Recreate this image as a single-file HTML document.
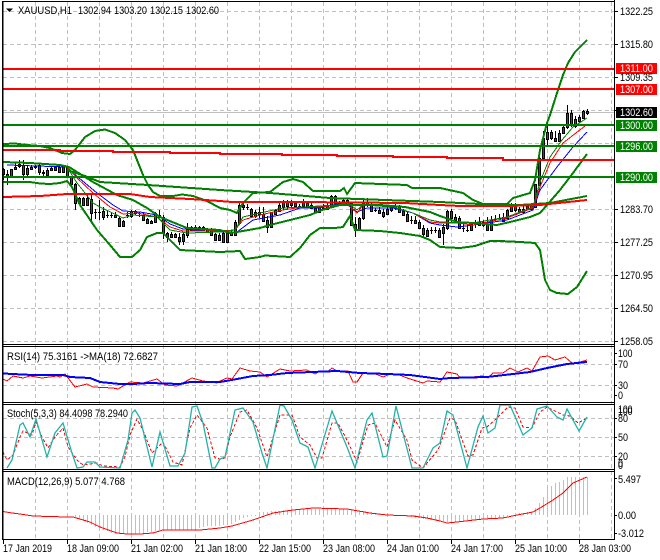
<!DOCTYPE html>
<html><head><meta charset="utf-8"><style>
html,body{margin:0;padding:0;background:#fff}
svg{display:block}
text{font-family:"Liberation Sans",sans-serif;font-size:11px;fill:#000}
.c{shape-rendering:crispEdges}
</style></head><body>
<svg width="660" height="560" viewBox="0 0 660 560" xmlns="http://www.w3.org/2000/svg">
<rect width="660" height="560" fill="#fff"/>
<g fill="none" stroke="#c0c0c0" stroke-dasharray="4 3" class="c">
<path d="M35.5 2V539M67.5 2V539M99.5 2V539M131.5 2V539M163.5 2V539M195.5 2V539M227.5 2V539M259.5 2V539M291.5 2V539M323.5 2V539M355.5 2V539M387.5 2V539M419.5 2V539M451.5 2V539M483.5 2V539M515.5 2V539M547.5 2V539M579.5 2V539M611.5 2V539"/>
<path d="M3 11.5H614M3 44.5H614M3 77.5H614M3 110.5H614M3 143.5H614M3 176.5H614M3 209.5H614M3 242.5H614M3 275.5H614M3 308.5H614M3 341.5H614"/>
<path d="M3 364.5H614M3 385.5H614M3 418.5H614M3 437.5H614M3 456.5H614"/>
</g>
<path d="M3 112.5H614" stroke="#c0c0c0" fill="none" class="c"/>

<!-- candle wicks -->
<path class="c" stroke="#000" fill="none" d="M3.5 168V180M7.5 170V185M11.5 169V176M15.5 163V170M19.5 160V168M23.5 160V180M27.5 165V176M31.5 165V170M35.5 165V169M39.5 164V175M43.5 170V176M47.5 168V177M51.5 167V171M55.5 166V171M59.5 166V173M63.5 165V173M67.5 166V178M71.5 176V185M75.5 183V210M79.5 197V205M83.5 197V206M87.5 193V206M91.5 193V223M95.5 209V219M99.5 200V220M103.5 207V220M107.5 210V218M111.5 213V218M115.5 212V218M119.5 217V226M123.5 220V226M127.5 212V218M131.5 210V218M135.5 210V215M139.5 212V217M143.5 213V221M147.5 218V223M151.5 220V224M155.5 212V223M159.5 210V218M163.5 215V239M167.5 232V242M171.5 232V238M175.5 233V238M179.5 233V245M183.5 232V245M187.5 223V238M191.5 226V231M195.5 225V230M199.5 226V231M203.5 226V231M207.5 228V233M211.5 228V236M215.5 233V241M219.5 233V241M223.5 232V243M227.5 230V243M231.5 231V236M235.5 220V236M239.5 203V223M243.5 203V210M247.5 204V210M251.5 208V217M255.5 210V218M259.5 207V218M263.5 207V222M267.5 216V233M271.5 212V227M275.5 209V215M279.5 202V212M283.5 200V210M287.5 200V210M291.5 200V208M295.5 201V207M299.5 204V208M303.5 199V208M307.5 202V207M311.5 203V209M315.5 207V213M319.5 206V213M323.5 204V210M327.5 203V210M331.5 195V208M335.5 195V204M339.5 201V206M343.5 199V205M347.5 199V205M351.5 202V226M355.5 217V237M359.5 217V231M363.5 200V220M367.5 198V207M371.5 202V212M375.5 208V212M379.5 207V214M383.5 209V218M387.5 207V215M391.5 205V212M395.5 204V210M399.5 205V213M403.5 209V216M407.5 212V222M411.5 216V224M415.5 216V224M419.5 220V229M423.5 225V238M427.5 228V236M431.5 227V234M435.5 227V233M439.5 228V238M443.5 224V245M447.5 210V230M451.5 209V222M455.5 214V221M459.5 216V229M463.5 223V232M467.5 226V232M471.5 222V230M475.5 220V228M479.5 217V226M483.5 220V227M487.5 217V230M491.5 216V230M495.5 215V221M499.5 214V220M503.5 213V221M507.5 209V218M511.5 203V212M515.5 203V212M519.5 207V213M523.5 206V213M527.5 204V210M531.5 203V209M535.5 184V208M539.5 155V186M543.5 131V158M547.5 125V145M551.5 130V140M555.5 131V142M559.5 130V142M563.5 126V134M567.5 105V129M571.5 110V127M575.5 116V128M579.5 115V123M583.5 110V119M587.5 109V115"/>
<!-- up bodies -->
<path class="c" stroke="#000" fill="#008000" d="M6.5 174.5h2v3h-2zM10.5 169.5h2v7h-2zM14.5 167.5h2v2h-2zM18.5 164.5h2v2h-2zM26.5 168.5h2v6h-2zM30.5 167.5h2v2h-2zM34.5 166.5h2v1h-2zM46.5 170.5h2v5h-2zM50.5 168.5h2v2h-2zM54.5 167.5h2v3h-2zM62.5 166.5h2v6h-2zM78.5 198.5h2v5h-2zM82.5 198.5h2v7h-2zM86.5 198.5h2v7h-2zM122.5 221.5h2v5h-2zM130.5 211.5h2v5h-2zM150.5 221.5h2v2h-2zM154.5 213.5h2v9h-2zM158.5 215.5h2v2h-2zM166.5 233.5h2v4h-2zM170.5 234.5h2v3h-2zM182.5 234.5h2v7h-2zM186.5 229.5h2v6h-2zM190.5 227.5h2v3h-2zM198.5 227.5h2v2h-2zM206.5 229.5h2v3h-2zM218.5 235.5h2v5h-2zM226.5 233.5h2v9h-2zM234.5 222.5h2v13h-2zM238.5 205.5h2v18h-2zM254.5 212.5h2v4h-2zM270.5 212.5h2v15h-2zM274.5 210.5h2v4h-2zM278.5 205.5h2v6h-2zM282.5 201.5h2v6h-2zM302.5 202.5h2v4h-2zM318.5 207.5h2v5h-2zM326.5 205.5h2v4h-2zM330.5 196.5h2v11h-2zM342.5 200.5h2v4h-2zM358.5 218.5h2v12h-2zM362.5 202.5h2v16h-2zM386.5 209.5h2v5h-2zM390.5 206.5h2v4h-2zM426.5 230.5h2v6h-2zM446.5 211.5h2v17h-2zM470.5 224.5h2v6h-2zM478.5 222.5h2v3h-2zM490.5 220.5h2v10h-2zM502.5 217.5h2v4h-2zM506.5 210.5h2v8h-2zM510.5 205.5h2v6h-2zM518.5 209.5h2v3h-2zM522.5 209.5h2v3h-2zM526.5 206.5h2v3h-2zM530.5 205.5h2v4h-2zM534.5 184.5h2v23h-2zM538.5 158.5h2v27h-2zM542.5 138.5h2v20h-2zM554.5 138.5h2v3h-2zM558.5 133.5h2v8h-2zM562.5 127.5h2v6h-2zM566.5 113.5h2v14h-2zM578.5 117.5h2v4h-2zM582.5 111.5h2v7h-2zM586.5 111.5h2v2h-2z"/>
<!-- down bodies -->
<path class="c" stroke="#000" fill="#f00" d="M2.5 169.5h2v5h-2zM22.5 165.5h2v9h-2zM38.5 165.5h2v7h-2zM42.5 172.5h2v1h-2zM58.5 167.5h2v5h-2zM66.5 167.5h2v10h-2zM70.5 177.5h2v7h-2zM74.5 184.5h2v19h-2zM90.5 199.5h2v14h-2zM102.5 211.5h2v6h-2zM114.5 215.5h2v2h-2zM118.5 218.5h2v8h-2zM134.5 211.5h2v2h-2zM142.5 215.5h2v5h-2zM146.5 219.5h2v4h-2zM162.5 217.5h2v16h-2zM174.5 234.5h2v3h-2zM178.5 237.5h2v4h-2zM194.5 227.5h2v2h-2zM202.5 227.5h2v3h-2zM210.5 231.5h2v4h-2zM214.5 234.5h2v6h-2zM222.5 233.5h2v9h-2zM230.5 233.5h2v2h-2zM242.5 205.5h2v2h-2zM250.5 209.5h2v7h-2zM258.5 212.5h2v2h-2zM262.5 214.5h2v7h-2zM266.5 220.5h2v7h-2zM286.5 202.5h2v4h-2zM290.5 203.5h2v2h-2zM294.5 203.5h2v3h-2zM306.5 203.5h2v3h-2zM310.5 205.5h2v3h-2zM314.5 208.5h2v4h-2zM334.5 196.5h2v7h-2zM338.5 202.5h2v3h-2zM346.5 200.5h2v4h-2zM350.5 203.5h2v22h-2zM354.5 224.5h2v6h-2zM366.5 202.5h2v3h-2zM370.5 204.5h2v7h-2zM378.5 210.5h2v3h-2zM382.5 212.5h2v4h-2zM398.5 206.5h2v6h-2zM402.5 211.5h2v4h-2zM406.5 214.5h2v7h-2zM414.5 220.5h2v3h-2zM418.5 222.5h2v6h-2zM422.5 228.5h2v6h-2zM438.5 230.5h2v7h-2zM442.5 227.5h2v6h-2zM450.5 211.5h2v7h-2zM454.5 217.5h2v3h-2zM458.5 218.5h2v10h-2zM482.5 222.5h2v3h-2zM486.5 224.5h2v6h-2zM514.5 205.5h2v5h-2zM546.5 132.5h2v7h-2zM550.5 132.5h2v6h-2zM570.5 113.5h2v12h-2zM574.5 119.5h2v7h-2z"/>
<!-- doji -->
<path class="c" stroke="#000" fill="none" d="M94 212.5h3M98 212.5h3M106 215.5h3M110 215.5h3M126 215.5h3M138 213.5h3M246 207.5h3M298 206.5h3M322 208.5h3M374 210.5h3M394 207.5h3M410 220.5h3M430 230.5h3M434 230.5h3M462 228.5h3M466 230.5h3M474 223.5h3M494 219.5h3M498 218.5h3"/>

<!-- thin moving averages -->
<g fill="none" stroke-width="1" class="c">
<path stroke="#00f" d="M7 165L67 167L73 173L97 193L113 205L123 211L140 212L157 215L170 224L183 229L220 232L237 232L253 220L280 215L300 208L320 208L337 204L348 205L357 212L367 208L393 208L413 213L430 223L440 225L457 227L473 225L507 220L533 210L540 190L557 167L573 147L587 132"/>
<path stroke="#f00" d="M67 167L77 178L93 193L110 207L123 214L137 213L157 217L170 227L183 231L220 231L235 230L243 220L260 215L283 210L303 207L320 207L337 205L348 205L357 213L363 205L393 207L413 213L430 222L440 223L457 223L473 225L507 218L533 208L540 187L550 163L563 143L585 126"/>
<path stroke="#008000" d="M67 167L77 183L93 203L100 207L123 218L133 215L157 217L170 230L187 233L220 232L235 230L243 217L260 213L283 208L303 207L337 205L348 203L357 210L363 205L393 207L413 213L430 220L440 222L473 223L507 217L533 207L540 182L550 157L562 140L573 127L587 118"/>
</g>

<!-- Bollinger and slow MA -->
<g fill="none" stroke="#008000" stroke-width="2" class="c">
<path d="M3 144L15 143.5L27 145L40 146L50 148L62 153L70 154L75 150L85 137L95 131L105 129.5L115 133L125 140L133 150L143 175L148 185L153 192L160 196L173 196L182 194.5L193 196L207 201L220 208L230 210L237 213L243 203L253 193L270 192L283 182L293 179L303 182L313 191L340 191L344 188L347 194L355 183L407 185L412 188L440 188L463 193L473 200L483 204L507 204L513 198L530 193L535 180L540 150L547 123L550 115L557 93L563 75L568 63L575 52L587 40"/>
<path d="M3 162L30 163L60 165L69 167L93 182L117 195L133 200L147 208L160 217L187 228L220 230L230 233L237 232L260 228L270 225L290 220L310 215L322 210L340 205L360 205L380 205L405 207L430 212L440 216L457 222L473 223L497 225L510 222L530 217L540 213L547 205L560 190L573 173L587 154"/>
<path d="M3 182L30 182L40 183.5L50 184L60 183L67 181L72 187L80 205L97 230L110 245L120 257L132 257L140 250L147 237L157 233L163 233L170 240L180 250L200 251L220 252L240 251L245 259L260 257L265 255.5L290 257L300 248L310 235L320 228L335 228L343 227L350 216L355 230L380 231L400 233L420 236L430 240L440 247L460 248L475 246L490 241L500 241L520 242L535 243L540 250L545 280L550 290L557 293L568 294L577 287L587 271"/>
<path d="M67 170L85 176L100 182L148 185L220 190L270 193L330 198L440 202L480 204L520 205L550 203L587 196"/>
</g>
<path class="c" fill="none" stroke="#f00" stroke-width="2" d="M3 197L40 196L67 194L130 194L150 197L190 199L220 201L232 202L300 202L405 203L440 205L460 206L510 206L540 205L587 200"/>
<path class="c" fill="none" stroke="#f00" stroke-width="2" d="M3 150H60V151H113V152H170V153H220V154H282V155H337V156H393V157H447V158H503V160H614"/>

<!-- levels -->
<rect x="3" y="68" width="611" height="2" fill="#f00"/>
<rect x="3" y="88" width="611" height="2" fill="#f00"/>
<rect x="3" y="124" width="611" height="2" fill="#008000"/>
<rect x="3" y="145" width="611" height="2" fill="#008000"/>
<rect x="3" y="176" width="611" height="2" fill="#008000"/>

<!-- RSI -->
<path class="c" fill="none" stroke="#f00" d="M3 379L7 381L13 376L23 378L30 376L42 378L57 376L60 377L65 374L75 387L87 384L93 387L113 388L118 389L130 382L143 383L157 379L165 385L177 386L192 378L203 381L217 383L220 381L227 378L232 379L240 368L250 371L260 372L267 377L280 369L290 371L307 370L315 374L320 371L327 372L332 368L337 371L348 371L353 382L357 382L363 373L373 373L383 377L390 374L397 374L407 378L423 383L427 381L440 382L447 372L457 374L460 378L468 378L472 377L483 376L488 378L493 373L503 373L510 368L518 372L527 368L532 371L540 357L548 356L555 360L565 357L572 363L580 362L587 360"/>
<path class="c" fill="none" stroke="#00f" stroke-width="2" d="M3 373.5L22 374.5L33 375L63 375L70 377L90 378L100 382L110 383L120 384L133 384L150 383L180 384L190 382L220 382L237 379L253 376L270 375L287 373L337 371L360 373L387 374L410 375L440 379L450 378L487 377L513 374L530 372L547 368L567 364L587 362"/>

<!-- Stoch -->
<path class="c" fill="none" stroke="#f00" stroke-dasharray="3 2" d="M3 452L7 460L13 455L20 437L23 431L32 435L36 422L42 437L48 448L55 437L63 428L68 447L77 460L83 465L97 463L103 466L120 467L125 457L130 435L137 419L143 430L152 453L163 442L173 462L182 465L190 428L197 415L207 428L215 458L220 459L225 458L230 437L240 412L247 410L257 428L267 457L280 415L292 415L300 437L310 445L317 458L322 458L332 423L338 423L348 442L357 462L368 425L375 423L387 447L395 420L407 440L412 460L423 468L438 450L440 445L450 418L455 420L468 456L473 455L482 428L487 427L497 418L508 407L515 408L523 427L532 428L540 412L547 407L557 412L563 415L570 416L578 423L587 418"/>
<path fill="none" stroke="#20b2aa" stroke-width="1.3" d="M7 468L12 460L20 425L23 423L30 437L36 419L47 457L55 433L63 423L72 453L77 468L83 467L87 462L95 462L100 467L120 468L128 440L132 413L135 410L140 418L152 467L160 432L170 466L178 466L185 453L192 407L197 406L203 423L212 468L215 468L220 459L225 457L235 410L243 408L253 422L262 453L267 468L280 405L284 406L292 420L300 443L308 447L315 468L332 411L347 447L355 468L367 420L372 413L383 457L387 456L396 406L412 468L423 468L433 448L440 443L447 411L453 415L467 468L478 427L483 416L488 433L495 428L500 405L510 405L523 435L532 428L537 409L547 406L557 417L563 420L567 409L579 431L587 417"/>

<!-- MACD histogram -->
<path class="c" fill="none" stroke="#c0c0c0" d="M75.5 515V517M79.5 515V519M83.5 515V521M87.5 515V523M91.5 515V525M95.5 515V527M99.5 515V528M103.5 515V530M107.5 515V531M111.5 515V533M115.5 515V534M119.5 515V534M123.5 515V534M127.5 515V534M131.5 515V534M135.5 515V534M139.5 515V533M143.5 515V533M147.5 515V532M151.5 515V532M155.5 515V531M159.5 515V530M163.5 515V530M167.5 515V530M171.5 515V530M175.5 515V530M179.5 515V530M183.5 515V530M187.5 515V530M191.5 515V530M195.5 515V530M199.5 515V528M203.5 515V527M207.5 515V526M211.5 515V526M215.5 515V526M219.5 515V526M223.5 515V525M227.5 515V525M231.5 515V524M235.5 515V522M239.5 515V520M243.5 515V518M247.5 515V517M251.5 515V516M255.5 515V516M259.5 512V515M263.5 512V515M267.5 512V515M271.5 511V515M275.5 511V515M279.5 511V515M283.5 510V515M287.5 510V515M291.5 510V515M295.5 510V515M299.5 509V515M303.5 509V515M307.5 509V515M311.5 509V515M315.5 509V515M319.5 509V515M323.5 509V515M327.5 509V515M331.5 509V515M335.5 509V515M339.5 509V515M343.5 509V515M347.5 510V515M351.5 510V515M355.5 510V515M359.5 511V515M363.5 511V515M367.5 512V515M371.5 513V515M375.5 513V515M379.5 514V515M407.5 515V516M411.5 515V517M415.5 515V518M419.5 515V518M423.5 515V519M427.5 515V519M431.5 515V520M435.5 515V520M439.5 515V521M443.5 515V521M447.5 515V522M451.5 515V522M455.5 515V522M459.5 515V521M463.5 515V521M467.5 515V521M471.5 515V520M475.5 515V520M479.5 515V519M483.5 515V519M487.5 515V519M491.5 515V518M495.5 515V518M499.5 515V518M503.5 515V518M507.5 515V516M515.5 513V515M519.5 513V515M523.5 513V515M527.5 512V515M531.5 512V515M535.5 508V515M539.5 503V515M543.5 497V515M547.5 487V515M551.5 486V515M555.5 483V515M559.5 482V515M563.5 480V515M567.5 477V515M571.5 477V515M575.5 477V515M579.5 477V515M583.5 477V515M587.5 477V515"/>
<path class="c" fill="none" stroke="#f00" stroke-width="1" d="M3 511.5L10 512.7L20 514L33 516L67 517L73 517L90 522L100 527L117 533L127 534L140 534L153 533L163 530L200 530L220 528L232 526L253 520L273 513L293 510L313 508L347 509L370 513L387 515L413 516L427 518L440 521L447 523L457 522L483 519L503 518L517 515L533 512L540 508L553 500L563 493L573 483L587 477"/>

<!-- frame -->
<g fill="#000">
<rect x="2" y="1" width="613" height="1"/>
<rect x="2" y="1" width="1.5" height="538"/>
<rect x="614" y="0" width="1" height="540"/>
<rect x="2" y="344" width="613" height="1"/>
<rect x="2" y="346" width="613" height="1"/>
<rect x="2" y="402" width="613" height="1"/>
<rect x="2" y="404" width="613" height="1"/>
<rect x="2" y="469" width="613" height="1"/>
<rect x="2" y="471" width="613" height="1"/>
<rect x="2" y="539" width="613" height="1"/>
</g>
<path class="c" stroke="#000" fill="none" d="M614 11.5h4M614 44.5h4M614 77.5h4M614 110.5h4M614 209.5h4M614 242.5h4M614 275.5h4M614 308.5h4M614 341.5h4M614 353.5h3M614 364.5h3M614 385.5h3M614 395.5h3M614 418.5h3M614 437.5h3M614 456.5h3M614 478.5h3M614 515.5h3M614 533.5h3M3.5 540v4M67.5 540v4M131.5 540v4M195.5 540v4M259.5 540v4M323.5 540v4M387.5 540v4M451.5 540v4M515.5 540v4M579.5 540v4"/>
<path d="M6 8.5h7l-3.5 3.5z" fill="#000"/>

<!-- header -->
<text x="18" y="14" textLength="54" lengthAdjust="spacingAndGlyphs">XAUUSD,H1</text>
<text x="78" y="14" textLength="33" lengthAdjust="spacingAndGlyphs">1302.94</text>
<text x="114" y="14" textLength="33" lengthAdjust="spacingAndGlyphs">1303.20</text>
<text x="150" y="14" textLength="33" lengthAdjust="spacingAndGlyphs">1302.15</text>
<text x="186" y="14" textLength="33" lengthAdjust="spacingAndGlyphs">1302.60</text>

<text x="7" y="360" textLength="151" lengthAdjust="spacingAndGlyphs">RSI(14) 75.3161  -&gt;MA(18) 72.6827</text>
<text x="7" y="417" textLength="121" lengthAdjust="spacingAndGlyphs">Stoch(5,3,3) 84.4098 78.2940</text>
<text x="7" y="485" textLength="118" lengthAdjust="spacingAndGlyphs">MACD(12,26,9) 5.077 4.768</text>

<!-- price labels -->
<rect x="616" y="63" width="41" height="11" fill="#f00"/>
<rect x="616" y="84" width="41" height="11" fill="#f00"/>
<rect x="616" y="107" width="41" height="11" fill="#000"/>
<rect x="616" y="120" width="41" height="11" fill="#008000"/>
<rect x="616" y="141" width="41" height="11" fill="#008000"/>
<rect x="616" y="172" width="41" height="11" fill="#008000"/>
<g>
<text x="620" y="15" textLength="33" lengthAdjust="spacingAndGlyphs">1322.25</text>
<text x="620" y="48" textLength="33" lengthAdjust="spacingAndGlyphs">1315.80</text>
<text x="620" y="81" textLength="33" lengthAdjust="spacingAndGlyphs">1309.35</text>
<text x="620" y="213" textLength="33" lengthAdjust="spacingAndGlyphs">1283.70</text>
<text x="620" y="246" textLength="33" lengthAdjust="spacingAndGlyphs">1277.25</text>
<text x="620" y="279" textLength="33" lengthAdjust="spacingAndGlyphs">1270.95</text>
<text x="620" y="312" textLength="33" lengthAdjust="spacingAndGlyphs">1264.50</text>
<text x="620" y="345" textLength="33" lengthAdjust="spacingAndGlyphs">1258.05</text>
</g>
<g>
<text style="fill:#fff" x="620" y="72" textLength="33" lengthAdjust="spacingAndGlyphs">1311.00</text>
<text style="fill:#fff" x="620" y="93" textLength="33" lengthAdjust="spacingAndGlyphs">1307.00</text>
<text style="fill:#fff" x="620" y="116" textLength="33" lengthAdjust="spacingAndGlyphs">1302.60</text>
<text style="fill:#fff" x="620" y="129" textLength="33" lengthAdjust="spacingAndGlyphs">1300.00</text>
<text style="fill:#fff" x="620" y="150" textLength="33" lengthAdjust="spacingAndGlyphs">1296.00</text>
<text style="fill:#fff" x="620" y="181" textLength="33" lengthAdjust="spacingAndGlyphs">1290.00</text>
</g>

<!-- indicator scales -->
<text x="618" y="357" textLength="14.5" lengthAdjust="spacingAndGlyphs">100</text>
<text x="618" y="368" textLength="10" lengthAdjust="spacingAndGlyphs">70</text>
<text x="618" y="389" textLength="10" lengthAdjust="spacingAndGlyphs">30</text>
<text x="618" y="399" textLength="5" lengthAdjust="spacingAndGlyphs">0</text>
<text x="618" y="413" textLength="14.5" lengthAdjust="spacingAndGlyphs">100</text>
<text x="618" y="415" textLength="14.5" lengthAdjust="spacingAndGlyphs">100</text>
<text x="618" y="422" textLength="10" lengthAdjust="spacingAndGlyphs">80</text>
<text x="618" y="441" textLength="10" lengthAdjust="spacingAndGlyphs">50</text>
<text x="618" y="460" textLength="10" lengthAdjust="spacingAndGlyphs">20</text>
<text x="618" y="467" textLength="5" lengthAdjust="spacingAndGlyphs">0</text>
<text x="618" y="469" textLength="5" lengthAdjust="spacingAndGlyphs">0</text>
<text x="618" y="483" textLength="23" lengthAdjust="spacingAndGlyphs">5.497</text>
<text x="618" y="519" textLength="18" lengthAdjust="spacingAndGlyphs">0.00</text>
<text x="618" y="537" textLength="26" lengthAdjust="spacingAndGlyphs">-3.012</text>

<!-- time axis -->
<text x="3" y="552" textLength="49" lengthAdjust="spacingAndGlyphs">17 Jan 2019</text>
<text x="67" y="552" textLength="52" lengthAdjust="spacingAndGlyphs">18 Jan 09:00</text>
<text x="131" y="552" textLength="52" lengthAdjust="spacingAndGlyphs">21 Jan 02:00</text>
<text x="195" y="552" textLength="52" lengthAdjust="spacingAndGlyphs">21 Jan 18:00</text>
<text x="259" y="552" textLength="52" lengthAdjust="spacingAndGlyphs">22 Jan 15:00</text>
<text x="323" y="552" textLength="52" lengthAdjust="spacingAndGlyphs">23 Jan 08:00</text>
<text x="387" y="552" textLength="52" lengthAdjust="spacingAndGlyphs">24 Jan 01:00</text>
<text x="451" y="552" textLength="52" lengthAdjust="spacingAndGlyphs">24 Jan 17:00</text>
<text x="515" y="552" textLength="52" lengthAdjust="spacingAndGlyphs">25 Jan 10:00</text>
<text x="579" y="552" textLength="52" lengthAdjust="spacingAndGlyphs">28 Jan 03:00</text>
</svg>
</body></html>
